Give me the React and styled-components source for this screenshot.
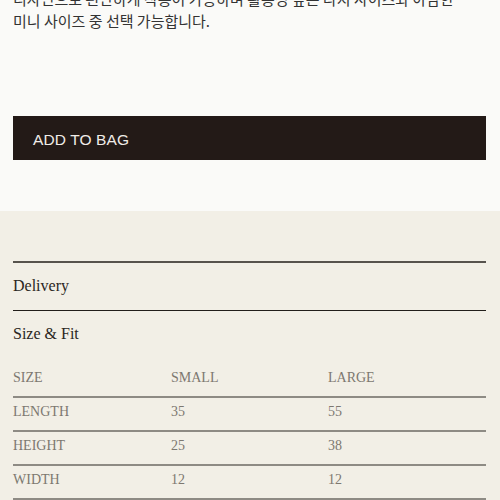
import React from 'react';
import styled, { createGlobalStyle } from 'styled-components';

const GlobalStyle = createGlobalStyle`
  body {
    margin: 0;
    background-color: #fafaf8;
    overflow: hidden;
  }
`;

const Page = styled.div`
  width: 500px;
`;

const ProductInfo = styled.section`
  background-color: #fafaf8;
  padding: 0 14px 51px 13px;
`;

const Description = styled.p`
  margin: -12px 0 0;
  font-family: "Noto Sans CJK KR", "Noto Sans", sans-serif;
  font-size: 15px;
  line-height: 22px;
  color: #333333;
`;

const AddButton = styled.button`
  display: flex;
  align-items: center;
  width: 100%;
  height: 44px;
  margin-top: 84px;
  padding: 3px 0 0 20px;
  border: none;
  background-color: #231a17;
  color: #f0ece8;
  font-family: "Liberation Sans", Arial, sans-serif;
  font-size: 15.5px;
  letter-spacing: 0.1px;
  cursor: pointer;
`;

const Details = styled.section`
  background-color: #f2efe6;
  padding: 50px 14px 40px 13px;
`;

const AccordionItem = styled.div`
  border-top: ${(p) => (p.$first ? '2px solid #57534d' : '1.5px solid #221e1a')};
`;

const AccordionTitle = styled.div`
  display: flex;
  align-items: center;
  height: ${(p) => (p.$open ? 'auto' : '46.5px')};
  padding-top: ${(p) => (p.$open ? '13px' : '0')};
  line-height: 20px;
  font-family: "Liberation Serif", "Times New Roman", serif;
  font-size: 16px;
  color: #2a2622;
`;

const SizeTable = styled.div`
  display: grid;
  grid-template-columns: 158px 157px 1fr;
  margin-top: 20px;
`;

const Cell = styled.div`
  height: 28px;
  line-height: 28px;
  padding-bottom: 4px;
  border-bottom: 2px solid #8e8b84;
  font-family: "Liberation Serif", "Times New Roman", serif;
  font-size: 14px;
  color: #7d7870;
  text-transform: uppercase;
`;

const rows = [
  ['Size', 'Small', 'Large'],
  ['Length', '35', '55'],
  ['Height', '25', '38'],
  ['Width', '12', '12'],
];

const App = () => {
  return (
    <Page>
      <GlobalStyle />
      <ProductInfo>
        <Description>
          디자인으로 편안하게 착용이 가능하며 활용성 높은 라지 사이즈와 아담한
          <br />
          미니 사이즈 중 선택 가능합니다.
        </Description>
        <AddButton>ADD TO BAG</AddButton>
      </ProductInfo>

      <Details>
        <AccordionItem $first>
          <AccordionTitle>Delivery</AccordionTitle>
        </AccordionItem>
        <AccordionItem>
          <AccordionTitle $open>Size &amp; Fit</AccordionTitle>
          <SizeTable>
            {rows.map((row) =>
              row.map((value, i) => <Cell key={row[0] + i}>{value}</Cell>)
            )}
          </SizeTable>
        </AccordionItem>
      </Details>
    </Page>
  );
};

export default App;
